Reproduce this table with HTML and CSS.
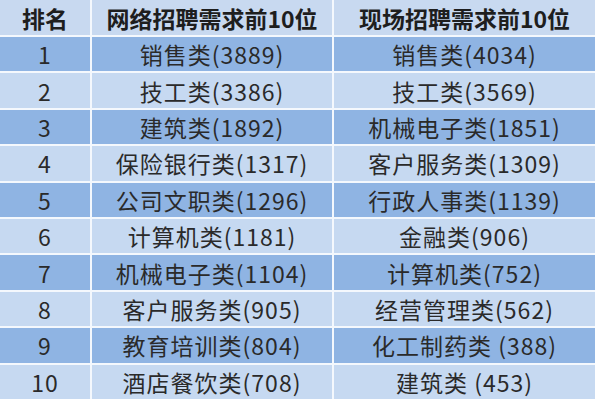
FILE: index.html
```html
<!DOCTYPE html>
<html lang="zh">
<head>
<meta charset="utf-8">
<link rel="stylesheet" href="styles.css">
</head>
<body>
<div class="table">
  <div class="cell head">排名</div>
  <div class="cell head">网络招聘需求前10位</div>
  <div class="cell head">现场招聘需求前10位</div>

  <div class="cell dark">1</div><div class="cell dark">销售类(3889)</div><div class="cell dark">销售类(4034)</div>
  <div class="cell light">2</div><div class="cell light">技工类(3386)</div><div class="cell light">技工类(3569)</div>
  <div class="cell dark">3</div><div class="cell dark">建筑类(1892)</div><div class="cell dark">机械电子类(1851)</div>
  <div class="cell light">4</div><div class="cell light">保险银行类(1317)</div><div class="cell light">客户服务类(1309)</div>
  <div class="cell dark">5</div><div class="cell dark">公司文职类(1296)</div><div class="cell dark">行政人事类(1139)</div>
  <div class="cell light">6</div><div class="cell light">计算机类(1181)</div><div class="cell light">金融类(906)</div>
  <div class="cell dark">7</div><div class="cell dark">机械电子类(1104)</div><div class="cell dark">计算机类(752)</div>
  <div class="cell light">8</div><div class="cell light">客户服务类(905)</div><div class="cell light">经营管理类(562)</div>
  <div class="cell dark">9</div><div class="cell dark">教育培训类(804)</div><div class="cell dark">化工制药类 (388)</div>
  <div class="cell light">10</div><div class="cell light">酒店餐饮类(708)</div><div class="cell light">建筑类 (453)</div>
</div>
</body>
</html>
```

FILE: styles.css
```css
html, body {
  margin: 0;
  padding: 0;
  background: #ffffff;
}
body {
  width: 600px;
  height: 400px;
  overflow: hidden;
}
.table {
  display: grid;
  grid-template-columns: 90px 240px 261px;
  grid-template-rows: 35px repeat(10, 34.4px);
  gap: 2px;
  background: #f4f8fd;
  width: 595px;
}
.cell {
  display: flex;
  align-items: center;
  justify-content: center;
  font-family: "Noto Sans CJK SC", "Noto Sans", sans-serif;
  font-size: 23px;
  color: #2a2a2a;
  white-space: nowrap;
  letter-spacing: 1px;
}
.head {
  background: #c8d9f0;
  font-weight: bold;
  color: #1e1e1e;
  letter-spacing: 0;
}
.dark {
  background: #8fb4e3;
}
.light {
  background: #c6d9f1;
}
```
